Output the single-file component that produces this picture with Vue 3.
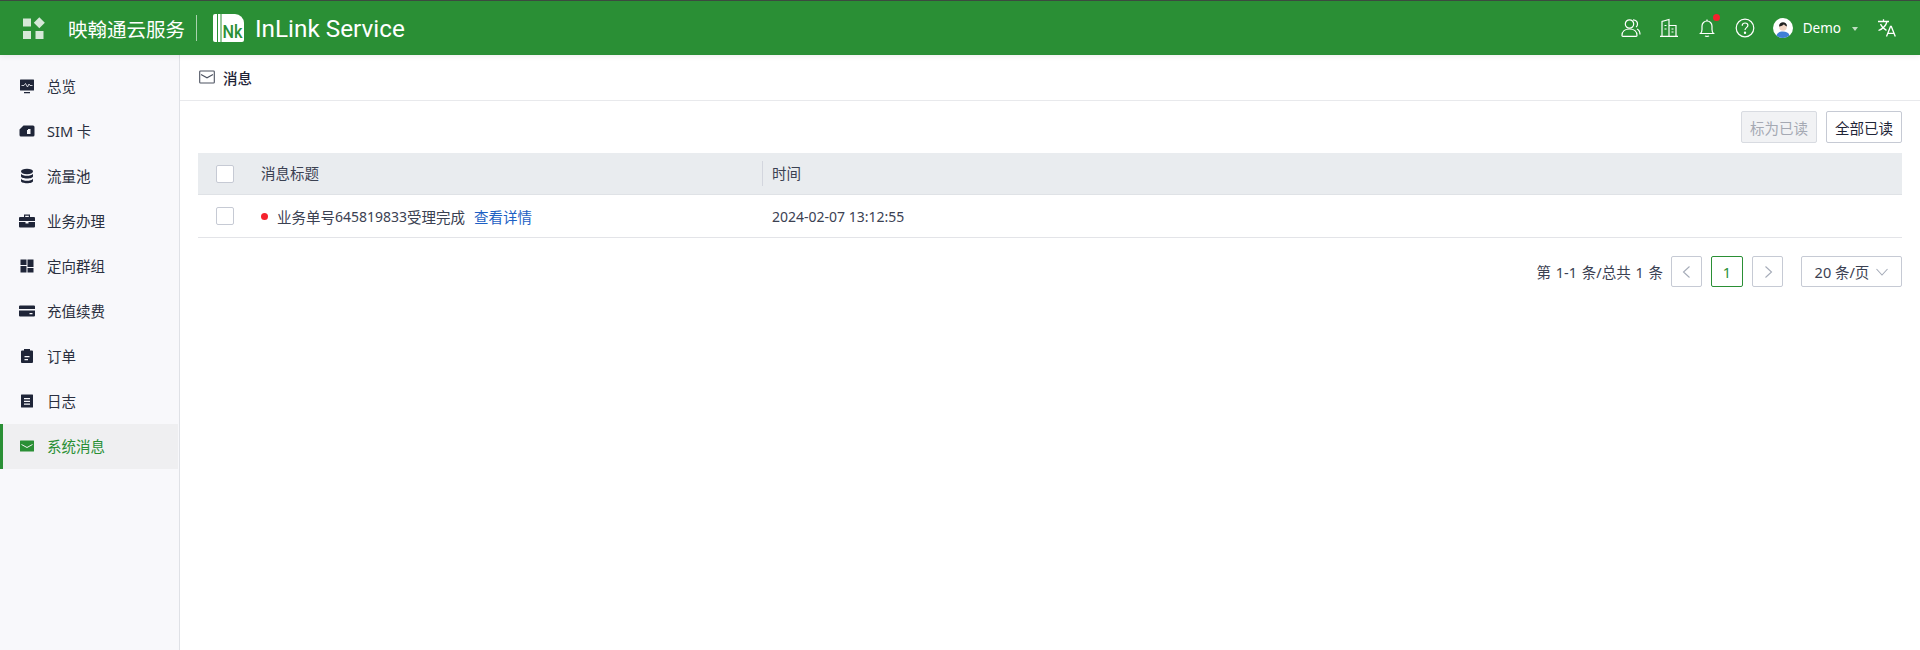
<script setup>
const menu = [
  { name: '总览', icon: 'monitor' },
  { name: 'SIM 卡', icon: 'sim' },
  { name: '流量池', icon: 'db' },
  { name: '业务办理', icon: 'case' },
  { name: '定向群组', icon: 'group' },
  { name: '充值续费', icon: 'card' },
  { name: '订单', icon: 'order' },
  { name: '日志', icon: 'log' },
  { name: '系统消息', icon: 'mail', active: true }
]
</script>

<template>
  <div class="page">
    <header class="topbar">
      <div class="brand">
        <svg class="apps" width="22" height="22" viewBox="0 0 22 22">
          <rect x="0" y="1.500" width="8" height="8" fill="#d6e8d8" />
          <rect x="12.400" y="1.800" width="7.800" height="7.800" fill="#d6e8d8" transform="rotate(45 16.300 5.700)" />
          <rect x="0" y="14" width="8" height="8" fill="#d6e8d8" />
          <rect x="12.500" y="14" width="8" height="8" fill="#d6e8d8" />
        </svg>
        <span class="cn-name">映翰通云服务</span>
        <i class="brand-sep"></i>
        <svg class="logo" width="31" height="28" viewBox="0 0 31 28">
          <path d="M2 0h2v28H2a2 2 0 0 1-2-2V2a2 2 0 0 1 2-2z" fill="#fff" />
          <rect x="5" y="0" width="2.500" height="28" fill="#fff" />
          <path d="M8.500 0H22a9 9 0 0 1 9 9v17a2 2 0 0 1-2 2H8.500z" fill="#fff" />
          <text x="9.500" y="24" class="logo-mark" textLength="20" lengthAdjust="spacingAndGlyphs">Nk</text>
        </svg>
        <span class="en-name">InLink Service</span>
      </div>
      <div class="tools">
        <svg class="tool" width="20" height="20" viewBox="0 0 20 20" fill="none" stroke="#fff" stroke-width="1.200">
          <circle cx="8.500" cy="6" r="4.200" />
          <path d="M1 17.500c0-4 3-6.500 7.500-6.500s7.500 2.500 7.500 6.500c0 .5-.3.800-.8.800H1.800c-.5 0-.8-.3-.8-.8z" />
          <path d="M12 1.800c2.800.2 4.500 2 4.500 4.200 0 1.200-.5 2.300-1.400 3.100M16 11c2 1 3 3 3 5.500" />
        </svg>
        <svg class="tool" width="20" height="20" viewBox="0 0 20 20" fill="none" stroke="#fff" stroke-width="1.200">
          <path d="M3 18V3.500L10 1.500V18M10 7.500h7V18M1 18.300h18M5.500 7.500h2M5.500 11h2M12.500 11h2M12.500 14h2" />
        </svg>
        <span class="bell-wrap">
          <svg class="tool" width="20" height="20" viewBox="0 0 20 20" fill="none" stroke="#fff" stroke-width="1.200">
            <path d="M3.500 15.500c1-1 1.500-2 1.500-4V8a5 5 0 0 1 10 0v3.500c0 2 .5 3 1.500 4z" />
            <path d="M8 17.800c.8.800 3.200.8 4 0M10 1.500v1.500" />
          </svg>
          <i class="bell-dot"></i>
        </span>
        <svg class="tool" width="20" height="20" viewBox="0 0 20 20" fill="none" stroke="#fff" stroke-width="1.200">
          <circle cx="10" cy="10" r="8.800" />
          <path d="M7.200 7.800c0-1.700 1.200-2.800 2.900-2.800s2.800 1 2.800 2.400c0 2.100-2.900 2.300-2.900 4.500" />
          <circle cx="10" cy="14.700" r=".6" fill="#fff" />
        </svg>
        <div class="user">
          <svg class="avatar" width="20" height="20" viewBox="0 0 20 20">
            <circle cx="10" cy="10" r="10" fill="#fff" />
            <path d="M3.500 17.600c.8-3 3.400-4 6.500-4s5.700 1 6.500 4a10 10 0 0 1-13 0z" fill="#3f7fd6" />
            <circle cx="10" cy="9" r="3.800" fill="#f3d6c6" />
            <path d="M6 8.500C6 5.500 8 4.200 10 4.200s4 1.300 4 4.300c-1.500-.5-2.500-1.500-3-2.300-.8 1.200-3 2-5 2.300z" fill="#222" />
          </svg>
          <span class="user-name">Demo</span>
          <i class="caret"></i>
        </div>
        <svg class="tool lang" width="20" height="20" viewBox="0 0 20 20" fill="none" stroke="#fff" stroke-width="1.300">
          <path d="M1 3.500h11M6.500 1.200v2.300M10 3.500c-.8 3.500-3.500 7-8.500 9M3.500 6c1 2.500 3.500 5 6 6.300" />
          <path d="M9.500 18.500l4-10h.8l4 10M11 15.300h5.800" />
        </svg>
      </div>
    </header>

    <div class="body">
      <aside class="sidebar">
        <a v-for="item in menu" :key="item.name" class="menu-item" :class="{ active: item.active }">
          <svg class="menu-icon" width="16" height="16" viewBox="0 0 16 16" fill="currentColor">
            <template v-if="item.icon === 'monitor'">
              <path d="M1.500 1.500h13a.5.500 0 0 1 .5.500v10a.5.500 0 0 1-.5.500h-13A.5.500 0 0 1 1 12V2a.5.500 0 0 1 .5-.5zM5 14h6v1.200H5z" />
              <path d="M2.500 7.500h2.500l1.500-2 2 3.500 1.500-3 1 1.500h2.500" fill="none" stroke="#f8f8fb" stroke-width=".8" />
            </template>
            <path v-else-if="item.icon === 'sim'" fill-rule="evenodd" d="M4.500 2.500H14a1.500 1.500 0 0 1 1.500 1.500v8a1.500 1.500 0 0 1-1.500 1.500H2A1.500 1.500 0 0 1 .5 12V6.500zM8 7v4h3.500V6H9v1z" />
            <template v-else-if="item.icon === 'db'">
              <ellipse cx="8" cy="3.500" rx="6" ry="2.700" />
              <path d="M2 5.700c1 1.500 3.500 2.100 6 2.100s5-.6 6-2.100v2.600c0 1.300-2.700 2.300-6 2.300s-6-1-6-2.300z" />
              <path d="M2 10.700c1 1.500 3.500 2.100 6 2.100s5-.6 6-2.100v2.200c0 1.300-2.700 2.300-6 2.300s-6-1-6-2.300z" />
            </template>
            <path v-else-if="item.icon === 'case'" d="M5 1.500h6V4h4a1 1 0 0 1 1 1v3H0V5a1 1 0 0 1 1-1h4zm1.200 1.200V4h3.600V2.700zM0 9h6.500v1.500h3V9H16v4.500a1 1 0 0 1-1 1H1a1 1 0 0 1-1-1z" />
            <path v-else-if="item.icon === 'group'" d="M1.500 1.500h6v5.500h-6zM8.500 1.500h6v7.500h-6zM1.500 8h6v6.500h-6zM8.500 10h6v4.500h-6z" />
            <path v-else-if="item.icon === 'card'" fill-rule="evenodd" d="M1 2.500h14a1 1 0 0 1 1 1V6H0V3.500a1 1 0 0 1 1-1zM0 7.500h16v5a1 1 0 0 1-1 1H1a1 1 0 0 1-1-1zm10.500 2.500v1.300h3V10z" />
            <path v-else-if="item.icon === 'order'" fill-rule="evenodd" d="M5 1h6v1.500h2a1 1 0 0 1 1 1V14a1 1 0 0 1-1 1H3a1 1 0 0 1-1-1V3.500a1 1 0 0 1 1-1h2zm.5 7v1.200h5V8zm0 3v1.200h3.500V11z" />
            <path v-else-if="item.icon === 'log'" fill-rule="evenodd" d="M2.500 1.500h11a.5.500 0 0 1 .5.500v12a.5.500 0 0 1-.5.500h-11A.5.500 0 0 1 2 14V2a.5.500 0 0 1 .5-.5zM5 5v1.200h6V5zm0 2.800V9h6V7.800zm0 2.800v1.200h6v-1.200z" />
            <template v-else>
              <rect x="1" y="2.500" width="14" height="11" rx=".5" />
              <path d="M2.500 6.500L8 9.500l5.500-3" fill="none" stroke="#efeff1" stroke-width="1" />
            </template>
          </svg>
          <span>{{ item.name }}</span>
        </a>
      </aside>

      <main class="main">
        <div class="title-bar">
          <svg width="16" height="16" viewBox="0 0 16 16" fill="none" stroke="#4c5260" stroke-width="1.100">
            <rect x=".7" y="2" width="14.600" height="12" rx=".8" />
            <path d="M2 5.500L8 8.800l6-3.300" />
          </svg>
          <span class="title-text">消息</span>
        </div>
        <div class="content">
          <div class="actions">
            <button class="btn disabled">标为已读</button>
            <button class="btn">全部已读</button>
          </div>
          <div class="table">
            <div class="tr thead">
              <div class="c-check"><i class="check"></i></div>
              <div class="c-title">消息标题</div>
              <div class="c-time">时间</div>
            </div>
            <div class="tr">
              <div class="c-check"><i class="check"></i></div>
              <div class="c-title"><i class="unread"></i>业务单号<span class="num">645819833</span>受理完成<a class="detail">查看详情</a></div>
              <div class="c-time"><span class="num">2024-02-07 13:12:55</span></div>
            </div>
          </div>
          <div class="pager">
            <span class="total">第 1-1 条/总共 1 条</span>
            <span class="pg">
              <svg width="12" height="12" viewBox="0 0 12 12" fill="none" stroke="#a5abb8" stroke-width="1.100"><path d="M8.500 .5L2.500 6l6 5.500" /></svg>
            </span>
            <span class="pg current">1</span>
            <span class="pg">
              <svg width="12" height="12" viewBox="0 0 12 12" fill="none" stroke="#a5abb8" stroke-width="1.100"><path d="M3.500 .5L9.500 6l-6 5.500" /></svg>
            </span>
            <span class="size">
              20 条/页
              <svg width="12" height="12" viewBox="0 0 12 12" fill="none" stroke="#a5abb8" stroke-width="1.100"><path d="M.5 3l5.500 6 5.500-6" /></svg>
            </span>
          </div>
        </div>
      </main>
    </div>
  </div>
</template>

<style scoped>
.page {
  height: 650px;
  display: flex;
  flex-direction: column;
  font-family: "Noto Sans", "Noto Sans CJK SC", sans-serif;
  font-size: 14.500px;
  color: #2b3040;
  background: #fff;
  overflow: hidden;
}
.num {
  font-size: 14px;
}
.topbar {
  height: 55px;
  box-sizing: border-box;
  border-top: 1px solid #3c4a40;
  background: #2a8f35;
  color: #fff;
  display: flex;
  align-items: center;
  justify-content: space-between;
  padding: 0 23px 0 23px;
  flex: none;
  position: relative;
  z-index: 2;
  box-shadow: 0 1px 6px rgba(0, 0, 0, .08);
}
.brand {
  display: flex;
  align-items: center;
}
.cn-name {
  margin-left: 23px;
  font-size: 19.500px;
  width: 118px;
  white-space: nowrap;
}
.brand-sep {
  width: 1px;
  height: 26px;
  margin: 0 16px 0 10px;
  background: rgba(255, 255, 255, .6);
}
.logo-mark {
  font-family: Roboto, sans-serif;
  font-size: 18px;
  font-weight: 500;
  fill: #2a8f35;
}
.en-name {
  margin-left: 11px;
  font-family: Roboto, sans-serif;
  font-size: 24.300px;
  white-space: nowrap;
}
.tools {
  display: flex;
  align-items: center;
  gap: 18px;
}
.bell-wrap {
  position: relative;
  display: flex;
}
.bell-dot {
  position: absolute;
  top: -4px;
  right: -3px;
  width: 7px;
  height: 7px;
  border-radius: 50%;
  background: #f5222d;
}
.user {
  display: flex;
  align-items: center;
}
.user-name {
  margin-left: 10px;
  font-size: 13.500px;
}
.caret {
  margin-left: 11px;
  margin-top: 2px;
  border-left: 3.500px solid transparent;
  border-right: 3.500px solid transparent;
  border-top: 4px solid rgba(255, 255, 255, .7);
}
.lang {
  margin-left: 1px;
}
.body {
  flex: 1;
  display: flex;
  min-height: 0;
}
.sidebar {
  width: 180px;
  box-sizing: border-box;
  flex: none;
  padding-top: 9px;
  background: #f8f8fb;
  border-right: 1px solid #dfe1e6;
}
.menu-item {
  height: 45px;
  box-sizing: border-box;
  display: flex;
  align-items: center;
  padding-left: 19px;
  padding-bottom: 2px;
  gap: 12px;
  color: #2b3040;
}
.menu-item:nth-child(n) .menu-icon {
  color: #1f2538;
  flex: none;
}
.menu-item.active {
  margin-right: 1px;
  border-left: 3px solid #2a8f35;
  padding-left: 16px;
  background: #efeff1;
  color: #2a8f35;
}
.menu-item.active .menu-icon {
  color: #2a8f35;
}
.main {
  flex: 1;
  min-width: 0;
}
.title-bar {
  height: 46px;
  box-sizing: border-box;
  border-bottom: 1px solid #e8e9ec;
  display: flex;
  align-items: center;
  gap: 8px;
  padding: 0 0 1px 19px;
}
.title-text {
  font-weight: 500;
  color: #1f2538;
}
.content {
  padding: 10px 18px 0;
}
.actions {
  display: flex;
  justify-content: flex-end;
  gap: 9px;
}
.btn {
  height: 32px;
  width: 76px;
  padding: 0;
  border: 1px solid #c6cad4;
  border-radius: 2px;
  background: #fff;
  font: inherit;
  color: #1f2538;
}
.btn.disabled {
  background: #f1f2f4;
  color: #a5a9b3;
  border-color: #d8dbe1;
}
.table {
  margin-top: 10px;
}
.tr {
  display: flex;
  align-items: center;
  height: 43px;
  box-sizing: border-box;
  border-bottom: 1px solid #e3e4e8;
}
.thead {
  height: 42px;
  background: #e9ecef;
  color: #3b4152;
  border-bottom-color: #dfe2e6;
}
.thead .c-title,
.thead .c-time {
  margin-top: -2px;
}
.c-check {
  width: 62px;
  padding-left: 18px;
  box-sizing: border-box;
  display: flex;
}
.check {
  width: 18px;
  height: 18px;
  box-sizing: border-box;
  background: #fff;
  border: 1px solid #c6cad4;
  border-radius: 2px;
}
.c-title {
  width: 502px;
  display: flex;
  align-items: center;
  color: #3b4152;
  padding-left: 1px;
  box-sizing: border-box;
}
.c-time {
  flex: 1;
  padding-left: 10px;
  color: #3b4152;
  position: relative;
}
.thead .c-time::before {
  content: "";
  position: absolute;
  left: 0;
  top: -1px;
  height: 25px;
  width: 1px;
  background: #d3d6de;
}
.unread {
  width: 7px;
  height: 7px;
  margin-right: 9px;
  border-radius: 50%;
  background: #f5222d;
}
.detail {
  margin-left: 9px;
  color: #1d5fc4;
}
.pager {
  margin-top: 18px;
  display: flex;
  justify-content: flex-end;
  align-items: center;
  color: #3b4152;
}
.total {
  word-spacing: 1px;
}
.pg {
  width: 31px;
  height: 31px;
  box-sizing: border-box;
  display: flex;
  align-items: center;
  justify-content: center;
  border: 1px solid #c6cad4;
  border-radius: 2px;
  margin-left: 9px;
}
.total + .pg {
  margin-left: 8px;
}
.pg.current {
  width: 32px;
  border-color: #2a8f35;
  color: #2a8f35;
}
.size {
  width: 101px;
  height: 31px;
  box-sizing: border-box;
  margin-left: 18px;
  display: flex;
  align-items: center;
  justify-content: center;
  gap: 7px;
  border: 1px solid #c6cad4;
  border-radius: 2px;
}
</style>
